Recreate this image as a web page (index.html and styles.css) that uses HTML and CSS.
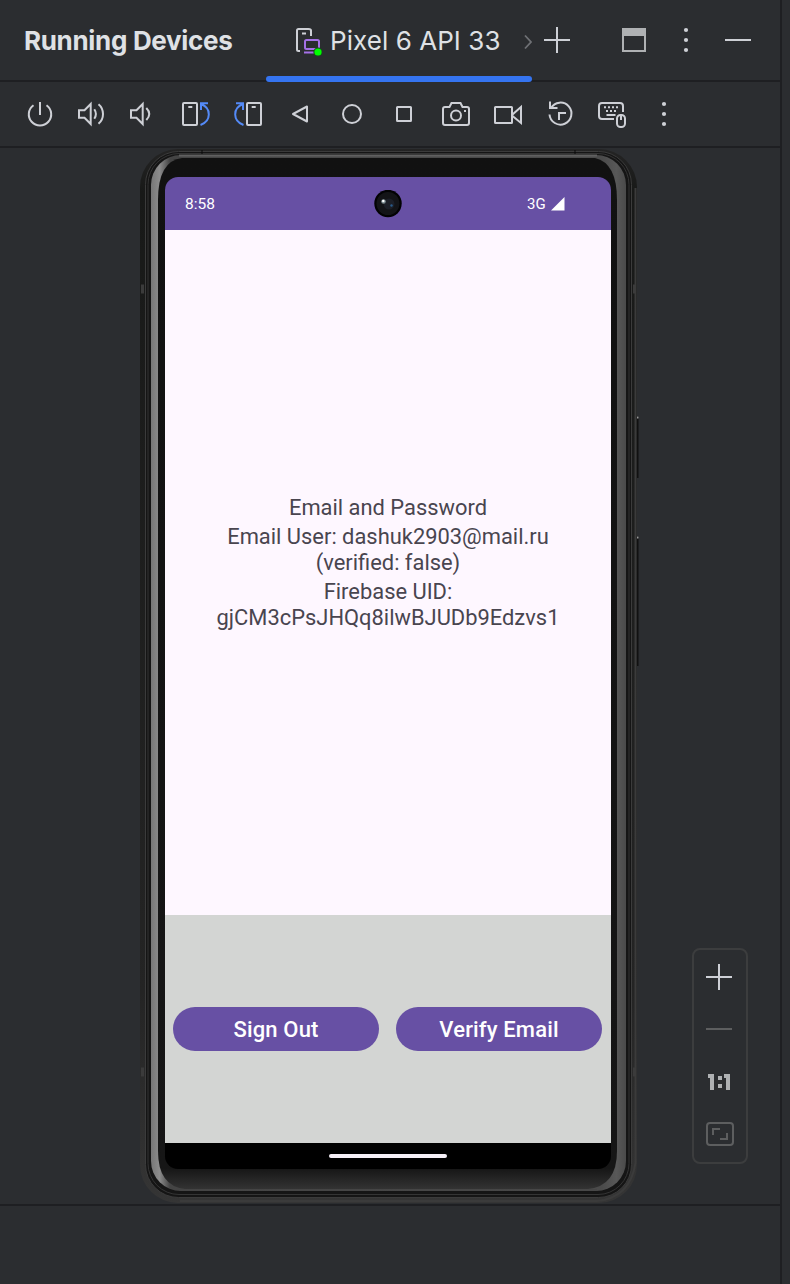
FILE: index.html
```html
<!DOCTYPE html>
<html lang="en">
<head>
<meta charset="utf-8">
<title>Running Devices</title>
<link rel="stylesheet" href="styles.css">
</head>
<body>
<div class="window">
  <header class="header">
    <h1 class="title">Running Devices</h1>
    <div class="tab">
      <svg class="tab-icon" width="28" height="32" viewBox="0 0 28 32" fill="none">
        <path d="M6 25H4.500Q3 25 3 23.500V4.500Q3 3 4.500 3H14.500Q17 3 17 4.500V10M8 7.500h4" stroke="#ced0d6" stroke-width="2"/>
        <rect x="11" y="14" width="14" height="9" rx="1.500" stroke="#a571e6" stroke-width="2"/>
        <path d="M10 26.500h11" stroke="#a571e6" stroke-width="2"/>
        <circle cx="24" cy="26" r="4.600" fill="#174b1d"/><circle cx="24" cy="26" r="3.600" fill="#00ff00"/>
      </svg>
      <span class="tab-label">Pixel 6 API 33</span>
      <svg class="chevron" width="8" height="16" viewBox="0 0 8 16" fill="none"><path d="M1 1.500L7 8l-6 6.500" stroke="#6f7175" stroke-width="1.800"/></svg>
    </div>
    <svg class="add line" width="28" height="28" viewBox="0 0 28 28"><path d="M1 14h26M14 1v26"/></svg>
    <svg class="view" width="24" height="24" viewBox="0 0 24 24"><path fill="#afb1b3" fill-rule="evenodd" d="M0 0h24v24H0zM2 8v14h20V8z"/></svg>
    <svg class="more" width="6" height="28" viewBox="0 0 6 28" fill="#ced0d6"><circle cx="3" cy="4" r="2.100"/><circle cx="3" cy="14" r="2.100"/><circle cx="3" cy="24" r="2.100"/></svg>
    <svg class="hide line" width="26" height="28" viewBox="0 0 26 28"><path d="M0 14h26"/></svg>
  </header>

  <nav class="toolbar">
    <svg class="icon" viewBox="0 0 32 32"><path d="M9.500 7.200a11.200 11.200 0 1 0 13 0M16 4v13"/></svg>
    <svg class="icon" viewBox="0 0 32 32"><path d="M3 12.200v7.600h5.500l6.200 6.200V6l-6.200 6.200zM18.300 11.300q3.200 4.700 0 9.400M22.500 6.200c6 5 6 14.600 0 19.600"/></svg>
    <svg class="icon" viewBox="0 0 32 32"><path d="M3 12.200v7.600h5.500l6.200 6.200V6l-6.200 6.200zM18.300 10q6 6 0 12"/></svg>
    <svg class="icon" viewBox="0 0 32 32"><rect x="3" y="5" width="14" height="22" rx="1"/><path d="M8.300 9h4"/><path class="blue" d="M20.500 27c11-4 11-17 .5-21M21 12V5.200h7"/></svg>
    <svg class="icon flip" viewBox="0 0 32 32"><rect x="3" y="5" width="14" height="22" rx="1"/><path d="M8.300 9h4"/><path class="blue" d="M20.500 27c11-4 11-17 .5-21M21 12V5.200h7"/></svg>
    <svg class="icon" viewBox="0 0 32 32"><path d="M9 16l14-7.500v15z" stroke-linejoin="round"/></svg>
    <svg class="icon" viewBox="0 0 32 32"><circle cx="16" cy="16" r="9"/></svg>
    <svg class="icon" viewBox="0 0 32 32"><rect x="9" y="9" width="14" height="14" rx=".5"/></svg>
    <svg class="icon" viewBox="0 0 32 32"><path d="M5 9h4.500l2-4h9l2 4H27q2 0 2 2v14q0 2-2 2H5q-2 0-2-2V11q0-2 2-2z"/><circle cx="16" cy="17.500" r="5"/><path d="M24 13h2"/></svg>
    <svg class="icon" viewBox="0 0 32 32"><rect x="3" y="9" width="17" height="16" rx=".5"/><path d="M20.500 16.500L29 9v16l-8.500-7"/></svg>
    <svg class="icon" viewBox="0 0 32 32"><path d="M7 10a11 11 0 1 1-1.500 6.500M6 3.500V10h7.500M22 15h-7v7"/></svg>
    <svg class="icon" viewBox="0 0 32 32"><path d="M18 21H6q-3 0-3-3V8q0-3 3-3h18q3 0 3 3v6M10.500 17h9"/><path d="M8 9.200h16M10 13h12" stroke-dasharray="2 2"/><rect x="21" y="17" width="8" height="12" rx="3.500"/><path d="M25 17v5"/></svg>
    <svg class="icon dots" viewBox="0 0 32 32"><circle cx="16" cy="6" r="2.100"/><circle cx="16" cy="16" r="2.100"/><circle cx="16" cy="26" r="2.100"/></svg>
  </nav>

  <main class="stage">
    <div class="phone">
      <svg class="phone-art" width="500" height="1056" viewBox="0 0 500 1056" fill="none">
        <defs>
          <linearGradient id="rim" x1="0" x2="0" y1="0" y2="1"><stop offset="0" stop-color="#242424"/><stop offset=".04" stop-color="#181918"/><stop offset=".8" stop-color="#242424"/><stop offset="1" stop-color="#353535"/></linearGradient>
          <linearGradient id="edge"><stop offset="0" stop-color="#777"/><stop offset=".018" stop-color="#8c8c8c"/><stop offset=".04" stop-color="#444"/><stop offset=".95" stop-color="#4b4b4b"/><stop offset=".98" stop-color="#585858"/><stop offset="1" stop-color="#4a4a4a"/></linearGradient>
          <linearGradient id="glass" x1="0" x2="0" y1="0" y2="1"><stop offset="0" stop-color="#111"/><stop offset=".98" stop-color="#161616"/><stop offset="1" stop-color="#333"/></linearGradient>
        </defs>
        <path d="M497 268v62M497 388v130" stroke="#111" stroke-width="3"/>
        <path d="M495.500 269.500h3M495.500 389.500h3" stroke="#999" stroke-width="2"/>
        <rect x="0" y="1" width="497" height="1054" rx="38" fill="url(#rim)"/>
        <path d="M495.500 40V1015Q490 1050 457 1053H40" stroke="#3b3b3b" stroke-width="2"/>
        <path d="M1 141h3M493 141h3M1 924h3M493 924h3" stroke="#3b3b3b" stroke-width="9"/>
        <rect x="5.500" y="3.500" width="486" height="1046" rx="33" fill="#151515" stroke="#3b3b3b"/>
        <rect x="8" y="5.500" width="481" height="1041" rx="31" stroke="#343434"/>
        <rect x="11" y="7" width="475" height="1036" rx="30" fill="url(#edge)"/>
        <path d="M39 7.500h418" stroke="#606060" stroke-width="2"/>
        <path d="M39 1042h418" stroke="#454545"/>
        <path d="M42 10H455Q477 15 477 52V1003Q477 1038 448 1041H45Q18 1038 18 1003V52Q18 13 42 10Z" fill="url(#glass)"/>
        <path d="M62 2V6M435 2v4" stroke="#090909"/>
      </svg>
      <section class="screen">
        <div class="status">
          <time class="clock">8:58</time>
          <svg class="lens" width="28" height="28" viewBox="0 0 28 28"><circle cx="14" cy="13.500" r="13.700" fill="#020203"/><circle cx="14" cy="13.500" r="11.500" fill="#131417"/><circle cx="15" cy="14" r="5.500" fill="#1c1f27"/><circle cx="9.500" cy="11.500" r="2.300" fill="#7c8d92"/><circle cx="9.300" cy="11" r="1.200" fill="#fff"/><circle cx="17.500" cy="15.500" r="1.200" fill="#295b8a"/></svg>
          <span class="network">3G</span>
          <svg class="signal" width="14" height="14" viewBox="0 0 14 14"><path d="M13.500 0v13.500H0z" fill="#fff"/></svg>
        </div>
        <div class="content">
          <p>Email and Password</p>
          <p>Email User: dashuk2903@mail.ru<br>(verified: false)</p>
          <p>Firebase UID:<br><span class="uid">gjCM3cPsJHQq8ilwBJUDb9Edzvs1</span></p>
        </div>
        <div class="actions">
          <button class="button">Sign Out</button>
          <button class="button">Verify Email</button>
        </div>
        <div class="navbar"><div class="handle"></div></div>
      </section>
    </div>
    <aside class="zoom">
      <svg width="52" height="212" viewBox="0 0 52 212" fill="none" stroke-width="2">
        <path d="M12 27h26M25 14v26" stroke="#ced0d6"/>
        <path d="M12 79h26" stroke="#5d5e5f"/>
        <path d="M14 124h6v16h-4v-12h-2zM30 124h6v16h-4v-12h-2zM24 126h4v4h-4zM24 134h4v4h-4z" fill="#afb1b3"/>
        <rect x="13" y="173" width="26" height="22" rx="3" stroke="#5d5e5f"/>
        <path d="M19 185v-6h7M33 183v6h-7" stroke="#5d5e5f"/>
      </svg>
    </aside>
  </main>
</div>
</body>
</html>
```
FILE: styles.css
```css
* { box-sizing: border-box; }
body { margin: 0; background: #2b2d30; overflow: hidden; }
svg { display: block; flex: none; }
.window { width: 782px; height: 1284px; border-right: 2px solid #1e1f22; }

.header { display: flex; align-items: center; height: 82px; border-bottom: 2px solid #1e1f22; padding-left: 24px; font-family: Inter, sans-serif; color: #dfe1e5; }
.title { width: 242px; margin: 0; padding-top: 2px; font-size: 26px; line-height: 32px; font-weight: 700; letter-spacing: -.32px; white-space: nowrap; }
.tab { position: relative; display: flex; align-items: center; width: 266px; height: 82px; margin-bottom: -2px; padding-left: 28px; flex: none; }
.tab::after { content: ""; position: absolute; left: 0; bottom: 0; width: 266px; height: 6px; border-radius: 3px; background: #3574f0; }
.tab-label { width: 194px; margin-left: 8px; font-size: 26px; line-height: 32px; letter-spacing: .06px; white-space: nowrap; }
.tab-icon { margin-top: 2px; }
.chevron { margin-top: 2px; }
.line { stroke: #ced0d6; stroke-width: 2; }
.add { margin-left: 11px; margin-top: -1px; }
.view { margin-left: 51px; }
.more { margin-left: 37px; }
.hide { margin-left: 36px; }

.toolbar { display: flex; align-items: center; gap: 20px; height: 66px; padding-left: 24px; border-bottom: 2px solid #1e1f22; }
.icon { width: 32px; height: 32px; fill: none; stroke: #ced0d6; stroke-width: 2; }
.icon .blue { stroke: #548af7; }
.flip { transform: scaleX(-1); }
.dots { fill: #ced0d6; stroke: none; }

.stage { display: flex; align-items: flex-start; height: 1058px; border-bottom: 2px solid #1e1f22; padding-left: 140px; }
.phone { position: relative; width: 500px; height: 1056px; padding: 29px 29px 0 25px; flex: none; }
.phone-art { position: absolute; left: 0; top: 0; }
.screen { position: relative; width: 446px; height: 992px; border-radius: 13px; overflow: hidden; background: #000; font-family: Roboto, sans-serif; }
.status { display: flex; align-items: center; height: 53px; padding-left: 20px; background: #6750a4; color: #fff; }
.clock { width: 189px; padding-top: 1px; font-size: 15.500px; }
.network { margin-left: 125px; width: 24px; font-size: 15px; }
.content { display: flex; flex-direction: column; align-items: center; justify-content: center; gap: 3px; height: 685px; padding-bottom: 20px; background: #fef7ff; color: #49454f; font-size: 21.900px; line-height: 26px; text-align: center; }
.content p { margin: 0; }
.actions { display: flex; align-items: center; gap: 17px; height: 228px; padding: 0 9px 0 8px; background: #d3d5d3; }
.button { flex: 1; height: 44px; border: 0; border-radius: 22px; background: #6750a4; color: #fff; font: 500 22px/44px Roboto, sans-serif; letter-spacing: .15px; padding: 1px 0 0; }
.navbar { display: flex; justify-content: center; height: 26px; padding-top: 11px; }
.handle { width: 118px; height: 4px; border-radius: 2px; background: #f5eff7; }

.zoom { width: 56px; height: 216px; margin: 800px 0 0 52px; border: 2px solid #3c3d3e; border-radius: 8px; flex: none; }
```
